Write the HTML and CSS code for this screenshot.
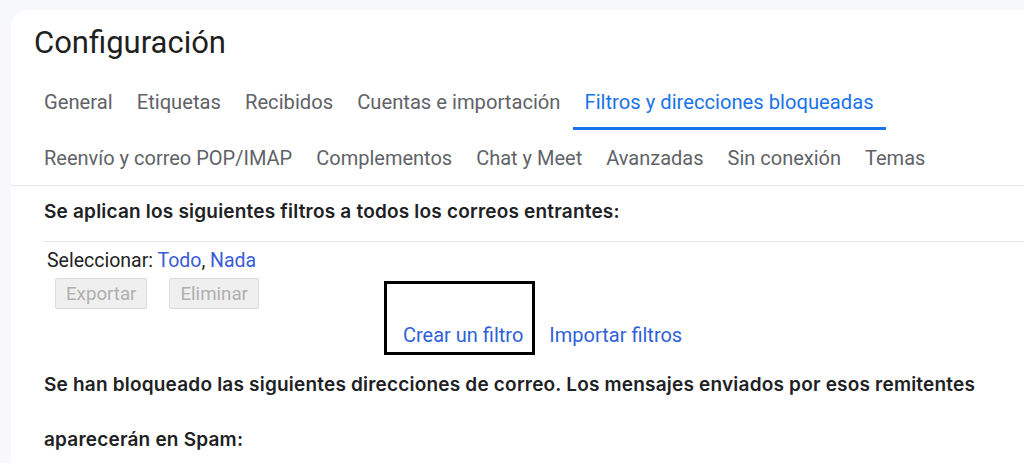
FILE: index.html
```html
<!DOCTYPE html>
<html lang="es">
<head>
<meta charset="utf-8">
<title>Configuración</title>
<link rel="stylesheet" href="styles.css">
</head>
<body>
<div class="card">
  <h1 class="title">Configuración</h1>
  <nav class="tabs">
    <div class="tab-row">
      <a class="tab">General</a>
      <a class="tab">Etiquetas</a>
      <a class="tab">Recibidos</a>
      <a class="tab">Cuentas e importación</a>
      <a class="tab active">Filtros y direcciones bloqueadas</a>
    </div>
    <div class="tab-row tab-row-last">
      <a class="tab">Reenvío y correo POP/IMAP</a>
      <a class="tab">Complementos</a>
      <a class="tab">Chat y Meet</a>
      <a class="tab">Avanzadas</a>
      <a class="tab">Sin conexión</a>
      <a class="tab">Temas</a>
    </div>
  </nav>
  <section class="content">
    <h2 class="heading heading-rule">Se aplican los siguientes filtros a todos los correos entrantes:</h2>
    <div class="select">Seleccionar: <a class="link">Todo</a>, <a class="link">Nada</a></div>
    <div class="buttons">
      <button class="btn" disabled>Exportar</button>
      <button class="btn" disabled>Eliminar</button>
    </div>
    <div class="create-row">
      <a class="action focused">Crear un filtro</a>
      <a class="action">Importar filtros</a>
    </div>
    <h2 class="heading heading-tall">Se han bloqueado las siguientes direcciones de correo. Los mensajes enviados por esos remitentes aparecerán en Spam:</h2>
  </section>
</div>
</body>
</html>
```
FILE: styles.css
```css
* { box-sizing: border-box; }
html, body { margin: 0; padding: 0; }
body {
  background: #f6f8fc;
  font-family: Roboto, "Liberation Sans", Arial, sans-serif;
  padding: 10px 0 0 11px;
  height: 463px;
  overflow: hidden;
}
.card {
  background: #fff;
  border-top-left-radius: 16px;
  min-height: 600px;
}
.title {
  margin: 0;
  padding: 13px 0 0 23px;
  height: 65px;
  font-size: 31px;
  line-height: 40px;
  font-weight: 400;
  color: #1f1f1f;
}
.tabs { display: block; }
.tab-row {
  display: flex;
  padding-left: 21px;
  height: 55px;
}
.tab-row-last {
  border-bottom: 1px solid #e6e6e6;
  height: 56px;
}
.tab {
  display: block;
  padding: 15px 12px 0;
  height: 55px;
  font-size: 20px;
  line-height: 24px;
  color: #5f6368;
  border-bottom: 3px solid transparent;
  white-space: nowrap;
}
.tab-row:first-child .tab { font-size: 20.2px; }
.tab-row-last .tab { padding-top: 16px; }
.tab.active {
  color: #1a73e8;
  border-bottom-color: #1a73e8;
}
.content { padding-left: 33px; }
.heading {
  margin: 0;
  font-family: Inter, Roboto, sans-serif;
  font-size: 19px;
  letter-spacing: 0.2px;
  font-weight: 600;
  color: #202124;
}
.heading-rule {
  padding: 16px 0 19px;
  line-height: 20px;
  border-bottom: 1px solid #e6e6e6;
}
.select {
  margin-top: 9px;
  padding-left: 3px;
  font-size: 19.5px;
  line-height: 20px;
  color: #222;
}
.link { color: #3a5bd6; }
.buttons {
  display: flex;
  gap: 22px;
  margin-top: 7px;
  padding-left: 11px;
}
.btn {
  height: 31px;
  padding: 0 10px;
  font-family: inherit;
  font-size: 18.7px;
  color: #b0b0b0;
  background: #efefef;
  border: 1px solid #dcdcdc;
  border-radius: 2px;
}
.create-row {
  display: flex;
  gap: 26px;
  margin-top: 15px;
  padding-left: 359px;
  font-size: 20px;
  line-height: 22px;
}
.action { color: #2f62d8; position: relative; white-space: nowrap; }
.action.focused::before {
  content: "";
  position: absolute;
  left: -19px;
  right: -12px;
  top: -43px;
  bottom: -9px;
  border: 3px solid #000;
}
.heading-tall {
  margin-top: 11px;
  line-height: 55px;
  max-width: 945px;
}
```
